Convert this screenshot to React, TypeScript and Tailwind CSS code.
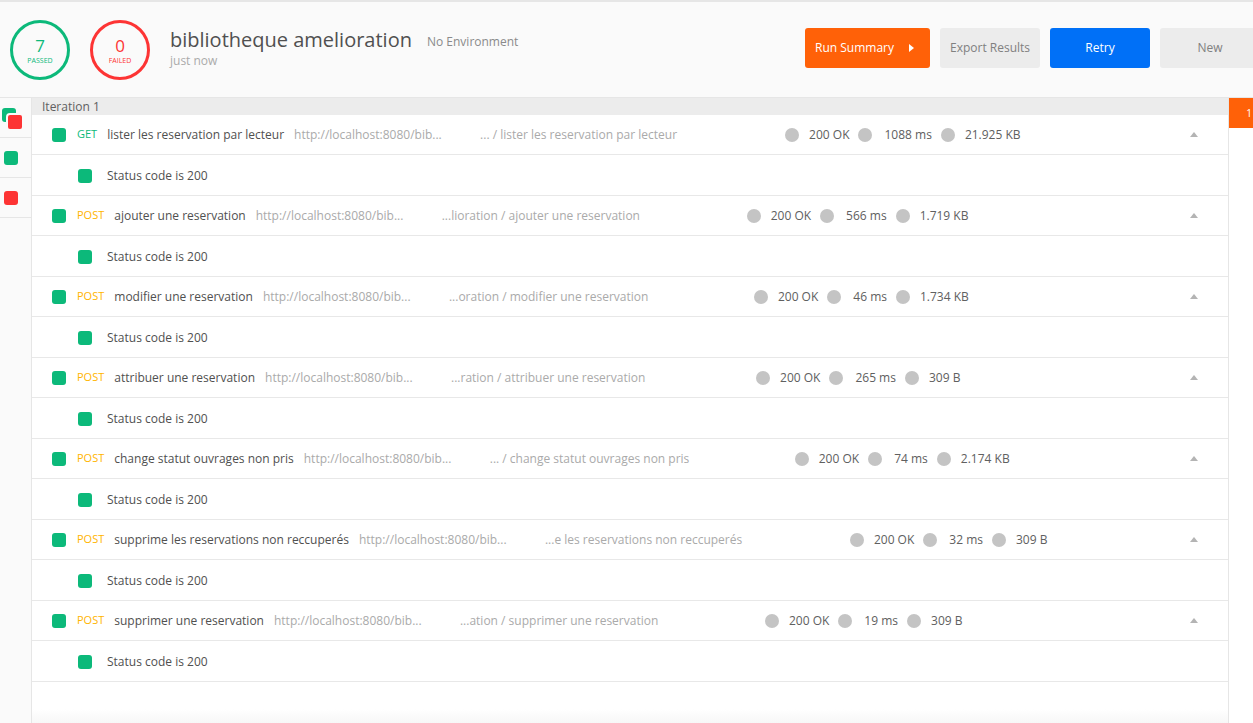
const requests = [
  { method: "GET", name: "lister les reservation par lecteur", path: "... / lister les reservation par lecteur", time: "1088 ms", size: "21.925 KB" },
  { method: "POST", name: "ajouter une reservation", path: "...lioration / ajouter une reservation", time: "566 ms", size: "1.719 KB" },
  { method: "POST", name: "modifier une reservation", path: "...oration / modifier une reservation", time: "46 ms", size: "1.734 KB" },
  { method: "POST", name: "attribuer une reservation", path: "...ration / attribuer une reservation", time: "265 ms", size: "309 B" },
  { method: "POST", name: "change statut ouvrages non pris", path: "... / change statut ouvrages non pris", time: "74 ms", size: "2.174 KB" },
  { method: "POST", name: "supprime les reservations non reccuperés", path: "...e les reservations non reccuperés", time: "32 ms", size: "309 B" },
  { method: "POST", name: "supprimer une reservation", path: "...ation / supprimer une reservation", time: "19 ms", size: "309 B" },
];

function Dot({ className = "" }: { className?: string }) {
  return <span className={`block w-[14px] h-[14px] rounded-full bg-[#c4c4c4] shrink-0 ${className}`} />;
}

function Square({ red }: { red?: boolean }) {
  return <span className={`block w-[14px] h-[14px] rounded-[3px] shrink-0 ${red ? "bg-[#fd3434]" : "bg-[#0cb97a]"}`} />;
}

export default function App() {
  return (
    <div className="w-[1253px] h-[723px] overflow-hidden bg-white flex flex-col font-['Open_Sans',sans-serif] text-[#505050]">
      <div className="h-[98px] shrink-0 bg-[#fafafa] border-t-2 border-[#e6e6e6] border-b border-b-[#e6e6e6] flex items-center pl-[10px]">
        <div className="w-[60px] h-[60px] rounded-full border-[3px] border-[#0cb97a] flex flex-col items-center justify-center text-[#0cb97a]">
          <span className="text-[17px] leading-[20px] mt-[2px]">7</span>
          <span className="text-[7px] leading-[10px]">PASSED</span>
        </div>
        <div className="w-[60px] h-[60px] rounded-full border-[3px] border-[#fd3434] flex flex-col items-center justify-center text-[#fd3434] ml-[20px]">
          <span className="text-[17px] leading-[20px] mt-[2px]">0</span>
          <span className="text-[7px] leading-[10px]">FAILED</span>
        </div>
        <div className="ml-[20px] flex flex-col mt-[-3px]">
          <div className="flex items-baseline">
            <span className="text-[20px] leading-[26px] text-[#505050]">bibliotheque amelioration</span>
            <span className="text-[12px] ml-[15px] text-[#8a8a8a] relative top-[-1px]">No Environment</span>
          </div>
          <span className="text-[12px] leading-[16px] text-[#aaaaaa]">just now</span>
        </div>
        <div className="ml-auto flex items-center gap-[10px] mr-[-7px] mt-[-4px]">
          <div className="w-[125px] h-[40px] rounded-[3px] bg-[#ff6108] text-white text-[12px] flex items-center pl-[10px]">
            Run Summary
            <span className="ml-[15px] w-0 h-0 border-y-[4px] border-y-transparent border-l-[5px] border-l-white" />
          </div>
          <div className="w-[100px] h-[40px] rounded-[3px] bg-[#ececec] text-[#808080] text-[12px] flex items-center justify-center">Export Results</div>
          <div className="w-[100px] h-[40px] rounded-[3px] bg-[#0070f7] text-white text-[12px] flex items-center justify-center">Retry</div>
          <div className="w-[100px] h-[40px] rounded-[3px] bg-[#ececec] text-[#808080] text-[12px] flex items-center justify-center">New</div>
        </div>
      </div>

      <div className="flex flex-1 min-h-0">
        <div className="w-[32px] shrink-0 bg-[#fafafa] border-r border-[#e6e6e6] flex flex-col">
          <div className="h-[40px] border-b border-[#e6e6e6] relative">
            <span className="absolute left-[2px] top-[10px] w-[14px] h-[14px] rounded-[3px] bg-[#0cb97a]" />
            <span className="absolute left-[6px] top-[15px] w-[18px] h-[18px] rounded-[4px] bg-[#fd3434] border-2 border-[#fafafa]" />
          </div>
          <div className="h-[40px] border-b border-[#e6e6e6] flex items-center pl-[4px]">
            <Square />
          </div>
          <div className="h-[40px] border-b border-[#e6e6e6] flex items-center pl-[4px]">
            <Square red />
          </div>
        </div>

        <div className="flex-1 flex flex-col bg-white relative">
          <div className="h-[17px] bg-[#ececec] text-[12px] leading-[17px] pl-[10px] text-[#606060]">Iteration 1</div>
          {requests.map((r) => (
            <div key={r.name}>
              <div className="h-[40px] border-b border-[#e8e8e8] flex items-center pl-[20px] pr-[30px] text-[12px]">
                <Square />
                <span className={`ml-[11px] text-[11px] ${r.method === "GET" ? "text-[#0cb97a]" : "text-[#ffb400]"}`}>{r.method}</span>
                <span className="ml-[10px] text-[#505050]">{r.name}</span>
                <span className="ml-[10px] w-[186px] shrink-0 text-[#aaaaaa]">http://localhost:8080/bib...</span>
                <span className="w-[305px] shrink-0 text-[#aaaaaa] whitespace-nowrap">{r.path}</span>
                <Dot />
                <span className="ml-[10px] text-[#606060]">200 OK</span>
                <Dot className="ml-[9px]" />
                <span className="ml-[12px] text-[#606060]">{r.time}</span>
                <Dot className="ml-[9px]" />
                <span className="ml-[10px] text-[#606060]">{r.size}</span>
                <span className="ml-auto w-0 h-0 border-x-[4px] border-x-transparent border-b-[5px] border-b-[#b4b4b4]" />
              </div>
              <div className="h-[41px] border-b border-[#e8e8e8] flex items-center pl-[46px] pt-[2px] text-[12px]">
                <Square />
                <span className="ml-[15px] text-[#505050]">Status code is 200</span>
              </div>
            </div>
          ))}
          <div className="absolute bottom-0 left-0 right-0 h-[14px] bg-gradient-to-b from-white to-[#f7f7f7]" />
        </div>

        <div className="w-[25px] shrink-0 border-l border-[#e6e6e6] bg-white">
          <div className="h-[30px] bg-[#ff6108] text-white text-[10px] flex items-center justify-end pr-[1px]">1</div>
        </div>
      </div>
    </div>
  );
}
